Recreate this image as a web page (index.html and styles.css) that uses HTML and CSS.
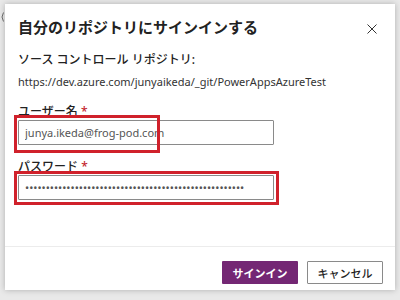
FILE: index.html
```html
<!DOCTYPE html>
<html lang="ja">
<head>
    <meta charset="UTF-8">
    <title>自分のリポジトリにサインインする</title>
    <link rel="stylesheet" href="styles.css">
</head>
<body>

    <svg class="backdrop-mark" width="4" height="10" viewBox="0 0 4 10">
        <path d="M3.5 0.5 Q0.5 5 3.5 9.5" stroke="#666" stroke-width="1" fill="none"/>
    </svg>

    <div class="dialog">
        <div class="dialog-header">
            <h2>自分のリポジトリにサインインする</h2>
            <span class="close-btn">
                <svg width="10" height="10" viewBox="0 0 10 10">
                    <path d="M0.5 0.5 L9.5 9.5 M9.5 0.5 L0.5 9.5" stroke="#333" stroke-width="1" fill="none"/>
                </svg>
            </span>
        </div>

        <div class="dialog-body">
            <p class="source-label">ソース コントロール リポジトリ:</p>
            <p class="source-url">https://dev.azure.com/junyaikeda/_git/PowerAppsAzureTest</p>

            <div class="field">
                <label>ユーザー名 <span class="req">*</span></label>
                <div class="input-wrap">
                    <input type="text" value="junya.ikeda@frog-pod.com">
                    <span class="mark mark-user"></span>
                </div>
            </div>

            <div class="field">
                <label>パスワード <span class="req">*</span></label>
                <div class="input-wrap">
                    <input type="password" value="aaaaaaaaaaaaaaaaaaaaaaaaaaaaaaaaaaaaaaaaaaaaaaaaaaaaa">
                    <span class="mark mark-pass"></span>
                </div>
            </div>
        </div>

        <div class="dialog-footer">
            <button class="btn btn-primary">サインイン</button>
            <button class="btn btn-default">キャンセル</button>
        </div>
    </div>

</body>
</html>
```

FILE: styles.css
```css
* {
    margin: 0;
    padding: 0;
    box-sizing: border-box;
    font-family: "Noto Sans", "Noto Sans CJK JP", sans-serif;
}
body {
    width: 400px;
    height: 300px;
    padding: 4px 5px 10px 5px;
    background-color: #e9e9e9;
    position: relative;
    overflow: hidden;
}
.backdrop-mark {
    position: absolute;
    left: 0;
    top: 12px;
}
.dialog {
    height: 286px;
    background: white;
    box-shadow: 0 0 6px rgba(0, 0, 0, 0.25);
    display: flex;
    flex-direction: column;
}
.dialog-header {
    display: flex;
    justify-content: space-between;
    align-items: center;
    padding: 12px 18px 0 13px;
}
.dialog-header h2 {
    font-size: 15px;
    font-weight: 700;
    color: #222;
    line-height: 22px;
}
.close-btn {
    display: flex;
    margin-top: 3px;
}
.dialog-body {
    flex: 1;
    padding: 0 13px;
}
.source-label {
    margin-top: 14px;
    font-size: 12px;
    font-weight: 500;
    color: #222;
    line-height: 16px;
}
.source-url {
    margin-top: 6px;
    font-size: 11px;
    color: #333;
    line-height: 16px;
}
.field {
    margin-top: 15px;
}
.field + .field {
    margin-top: 15px;
}
.field label {
    display: block;
    font-size: 12px;
    font-weight: 500;
    color: #222;
    line-height: 14px;
}
.req {
    color: #c4262e;
}
.input-wrap {
    position: relative;
    width: 256px;
    margin-top: 1px;
}
.input-wrap input {
    display: block;
    width: 256px;
    height: 25px;
    padding: 0 6px;
    border: 1px solid #8a8a8a;
    border-radius: 1px;
    font-size: 11px;
    color: #555;
    outline: none;
}
.mark {
    position: absolute;
    border: 3px solid #d0212b;
    pointer-events: none;
}
.mark-user {
    left: -4px;
    top: -5px;
    width: 146px;
    height: 38px;
}
.mark-pass {
    left: -4px;
    top: -4px;
    width: 265px;
    height: 34px;
}
.dialog-footer {
    border-top: 1px solid #ececec;
    display: flex;
    justify-content: flex-end;
    gap: 9px;
    padding: 14px 12px 6px 0;
}
.btn {
    width: 76px;
    height: 23px;
    font-size: 11px;
    font-weight: 700;
    border-radius: 1px;
    cursor: pointer;
}
.btn-primary {
    background: #742774;
    color: white;
    border: none;
}
.btn-default {
    background: white;
    color: #222;
    border: 1px solid #8a8a8a;
    font-weight: 500;
}
```
